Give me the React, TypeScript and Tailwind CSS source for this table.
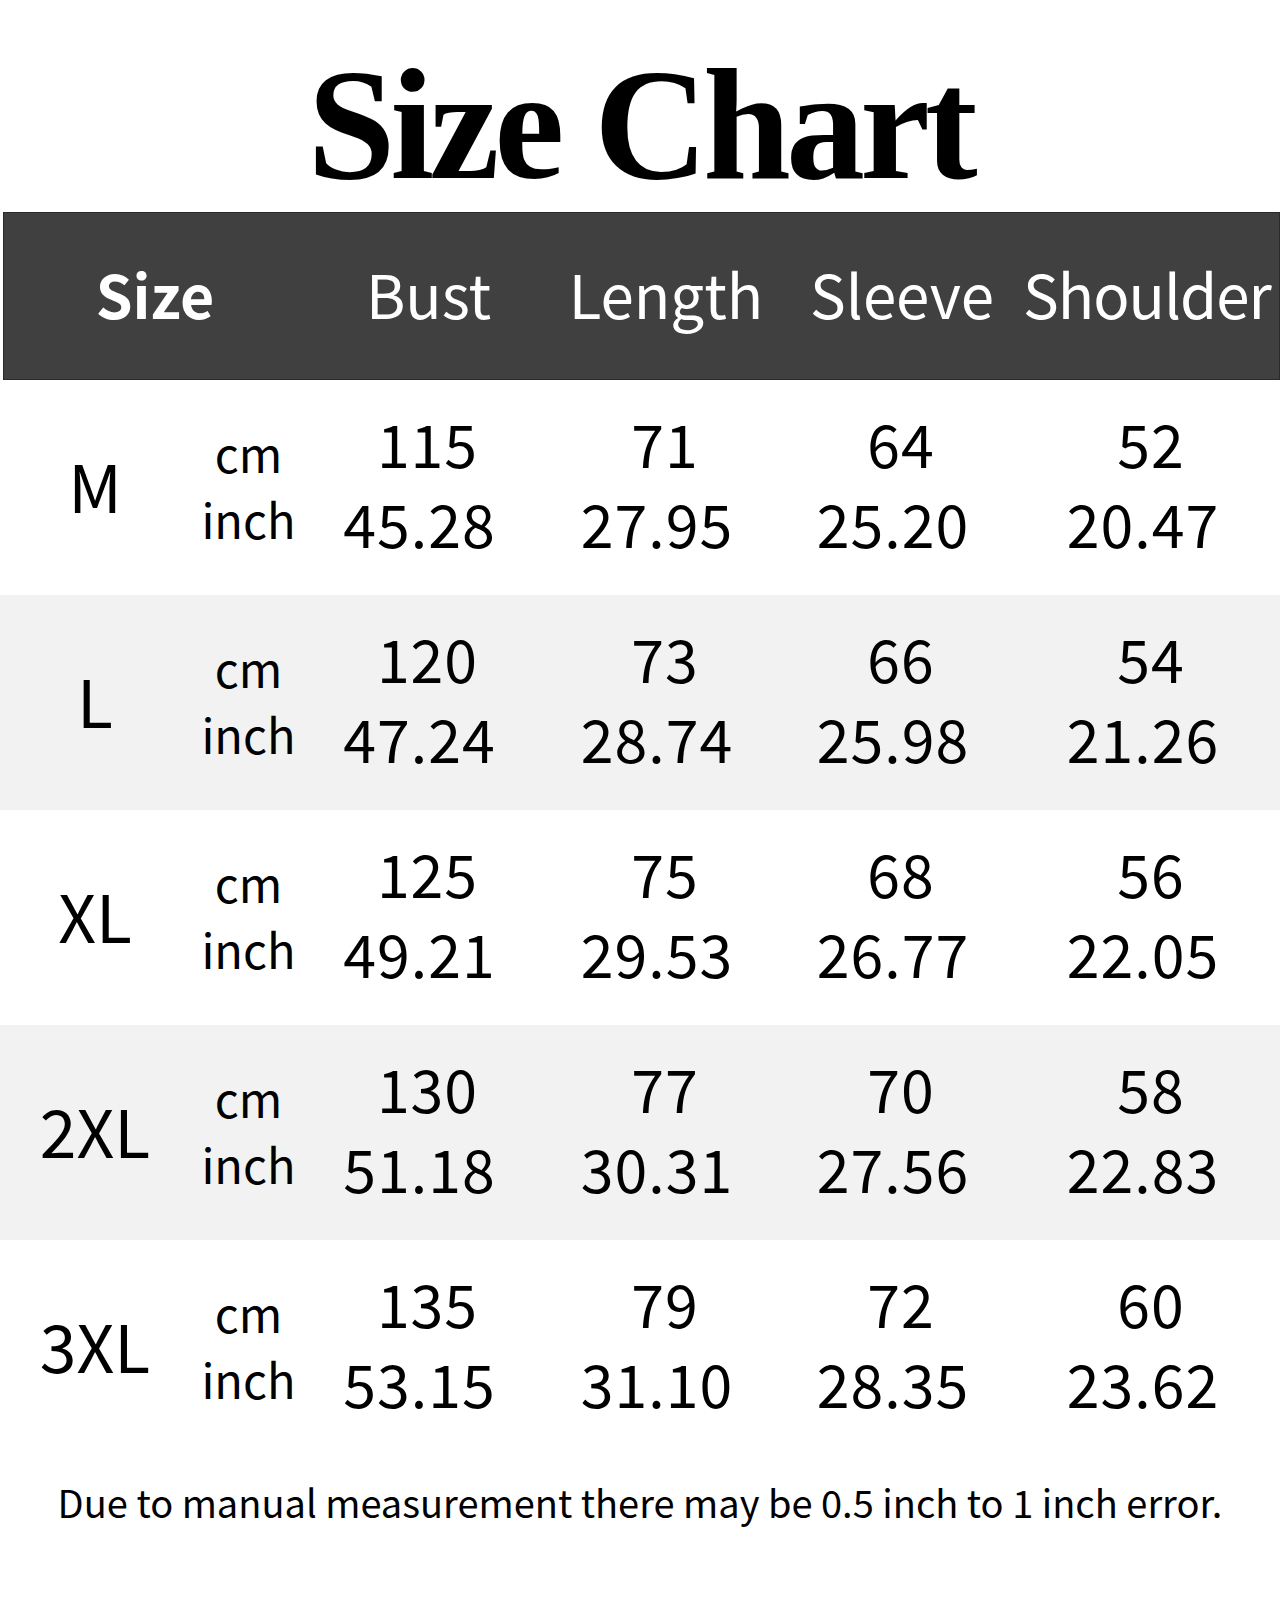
import React from "react";

type Row = { size: string; gray: boolean; cm: string[]; inch: string[] };

const rows: Row[] = [
  { size: "M", gray: false, cm: ["115", "71", "64", "52"], inch: ["45.28", "27.95", "25.20", "20.47"] },
  { size: "L", gray: true, cm: ["120", "73", "66", "54"], inch: ["47.24", "28.74", "25.98", "21.26"] },
  { size: "XL", gray: false, cm: ["125", "75", "68", "56"], inch: ["49.21", "29.53", "26.77", "22.05"] },
  { size: "2XL", gray: true, cm: ["130", "77", "70", "58"], inch: ["51.18", "30.31", "27.56", "22.83"] },
  { size: "3XL", gray: false, cm: ["135", "79", "72", "60"], inch: ["53.15", "31.10", "28.35", "23.62"] },
];

const sans = "font-['Noto_Sans_CJK_SC','Liberation_Sans',sans-serif]";

export default function App() {
  return (
    <div className="w-[1280px] h-[1600px] bg-white text-black overflow-hidden">
      <div className="h-[212px] pt-[46px] flex justify-center">
        <div className="font-['Liberation_Serif',serif] font-bold text-[158px] leading-none tracking-[-5px]">
          Size Chart
        </div>
      </div>

      <div className={`${sans} ml-[3px] h-[168px] bg-[#404040] border border-[#2a2a2a] grid grid-cols-[302px_245px_230px_242px_258px] items-center text-white`}>
        <div className="text-center font-bold text-[59px] leading-none pb-[6px]">Size</div>
        <div className="text-center text-[60px] leading-none pb-[6px]">Bust</div>
        <div className="text-center text-[60px] leading-none pb-[6px]">Length</div>
        <div className="text-center text-[60px] leading-none pb-[6px]">Sleeve</div>
        <div className="text-center text-[60px] leading-none tracking-[-1px] pb-[6px] pr-[14px] whitespace-nowrap">Shoulder</div>
      </div>

      {rows.map((r) => (
        <div
          key={r.size}
          className={`${sans} h-[215px] grid grid-cols-[190px_115px_245px_230px_242px_258px] ${r.gray ? "bg-[#f2f2f2]" : "bg-white"}`}
        >
          <div className="flex items-center justify-center text-[66px] leading-none pb-[8px]">{r.size}</div>
          <div className="flex flex-col items-center justify-center text-[47px] leading-[66px] pb-[4px] pl-[2px]">
            <span>cm</span>
            <span>inch</span>
          </div>
          {r.cm.map((c, i) => (
            <div key={i} className="flex flex-col items-center justify-center text-[59px] leading-[80px] tracking-[1px] pb-[10px]">
              <span>{c}</span>
              <span className="pr-[16px]">{r.inch[i]}</span>
            </div>
          ))}
        </div>
      ))}

      <div className={`${sans} mt-[28px] text-center text-[38px] leading-none`}>
        Due to manual measurement there may be 0.5 inch to 1 inch error.
      </div>
    </div>
  );
}
